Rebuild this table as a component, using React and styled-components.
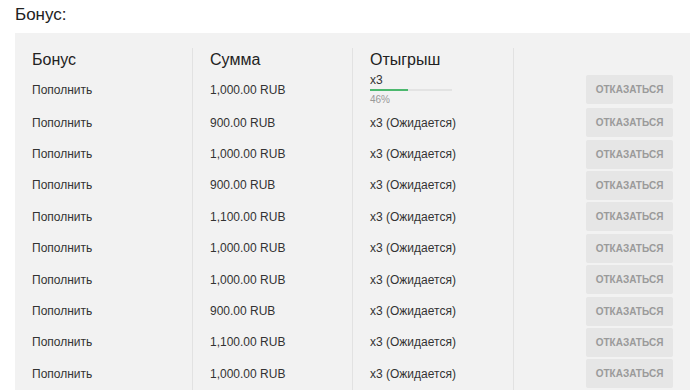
import React from "react";
import styled, { createGlobalStyle } from "styled-components";

const Global = createGlobalStyle`
  html, body { margin: 0; padding: 0; background: #fff; }
  body { font-family: "Liberation Sans", Arial, sans-serif; color: #333; }
`;

const Page = styled.div`
  padding: 3px 10px 0 15px;
`;

const Title = styled.h2`
  margin: 0;
  font-size: 17px;
  font-weight: normal;
  line-height: 24px;
  color: #222;
  height: 30px;
`;

const Panel = styled.div`
  background: #f2f2f2;
  width: 675px;
  padding-top: 15px;
  display: grid;
  grid-template-columns: 177px 160px 161px 177px;
`;

const Cell = styled.div`
  box-sizing: border-box;
  height: ${(p) => p.$h}px;
  padding-left: 17px;
  border-left: ${(p) => (p.$first ? "none" : "1px solid #e2e2e2")};
  display: flex;
  align-items: center;
  font-size: 12px;
  color: #333;
`;

const HeadCell = styled(Cell)`
  font-size: 16px;
  color: #222;
`;

const ActionCell = styled(Cell)`
  justify-content: flex-end;
  padding-right: 17px;
`;

const Button = styled.button`
  width: 87px;
  height: 29px;
  border: none;
  border-radius: 2px;
  background: #e6e6e6;
  color: #9a9a9a;
  font-family: "Liberation Sans", Arial, sans-serif;
  font-weight: bold;
  font-size: 10px;
  text-transform: uppercase;
  padding: 0;
  cursor: pointer;
`;

const Wager = styled.div`
  display: flex;
  flex-direction: column;
  width: 82px;
`;

const WagerText = styled.div`
  font-size: 12px;
  line-height: 13px;
`;

const Track = styled.div`
  height: 2px;
  background: #e3e3e3;
  margin: 2px 0 3px;
`;

const Fill = styled.div`
  height: 100%;
  background: #4cb86e;
`;

const Percent = styled.div`
  font-size: 10px;
  line-height: 11px;
  color: #999;
`;

const rows = [
  ["1,000.00 RUB", null],
  ["900.00 RUB", "x3 (Ожидается)"],
  ["1,000.00 RUB", "x3 (Ожидается)"],
  ["900.00 RUB", "x3 (Ожидается)"],
  ["1,100.00 RUB", "x3 (Ожидается)"],
  ["1,000.00 RUB", "x3 (Ожидается)"],
  ["1,000.00 RUB", "x3 (Ожидается)"],
  ["900.00 RUB", "x3 (Ожидается)"],
  ["1,100.00 RUB", "x3 (Ожидается)"],
  ["1,000.00 RUB", "x3 (Ожидается)"],
];

export default function App() {
  return (
    <>
      <Global />
      <Page>
        <Title>Бонус:</Title>
        <Panel>
          <HeadCell $first $h={24}>Бонус</HeadCell>
          <HeadCell $h={24}>Сумма</HeadCell>
          <HeadCell $h={24}>Отыгрыш</HeadCell>
          <HeadCell $h={24} />
          {rows.map(([sum, wager], i) => {
            const h = i === 0 ? 35 : 31.4;
            return (
              <React.Fragment key={i}>
                <Cell $first $h={h}>Пополнить</Cell>
                <Cell $h={h}>{sum}</Cell>
                <Cell $h={h}>
                  {wager ? (
                    wager
                  ) : (
                    <Wager>
                      <WagerText>x3</WagerText>
                      <Track>
                        <Fill style={{ width: "46%" }} />
                      </Track>
                      <Percent>46%</Percent>
                    </Wager>
                  )}
                </Cell>
                <ActionCell $h={h}>
                  <Button>Отказаться</Button>
                </ActionCell>
              </React.Fragment>
            );
          })}
        </Panel>
      </Page>
    </>
  );
}
